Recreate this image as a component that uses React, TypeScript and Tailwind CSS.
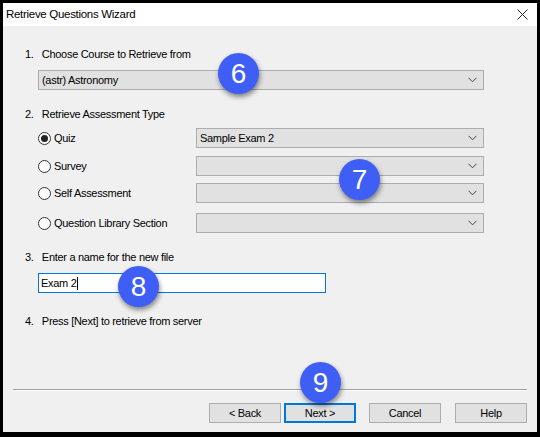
import React from "react";

const FONT = { fontFamily: '"Liberation Sans", Arial, sans-serif' };

function Chevron() {
  return (
    <svg width="9" height="6" viewBox="0 0 9 6" className="shrink-0">
      <polyline points="0.5,0.8 4.5,4.8 8.5,0.8" fill="none" stroke="#444" strokeWidth="1" />
    </svg>
  );
}

function Combo({ text, className = "" }: { text?: string; className?: string }) {
  return (
    <div
      className={`h-[20px] flex items-center justify-between bg-[#e1e1e1] border border-[#adadad] pl-[3px] pr-[6px] text-black ${className}`}
    >
      <span>{text ?? ""}</span>
      <Chevron />
    </div>
  );
}

function Radio({ checked }: { checked?: boolean }) {
  return (
    <span className="w-[13px] h-[13px] rounded-full border border-[#333] bg-white flex items-center justify-center shrink-0">
      {checked ? <span className="w-[7px] h-[7px] rounded-full bg-[#222]" /> : null}
    </span>
  );
}

function RadioRow({ label, checked, value, mt }: { label: string; checked?: boolean; value?: string; mt: string }) {
  return (
    <div className={`flex items-center ${mt}`}>
      <div className="w-[158px] flex items-center gap-[3px]">
        <Radio checked={checked} />
        <span>{label}</span>
      </div>
      <Combo text={value} className="w-[288px]" />
    </div>
  );
}

function Badge({ n, x, y }: { n: number; x: number; y: number }) {
  // x/y = centre in page coords, minus the 3px window frame
  return (
    <div
      className="absolute w-[41px] h-[41px] rounded-full bg-[#3f5ef5] text-white flex items-center justify-center text-[28px] tracking-normal shadow-[1px_3px_5px_rgba(0,0,0,0.45)]"
      style={{ left: x - 20, top: y - 20 }}
    >
      {n}
    </div>
  );
}

function Btn({ label, primary, className = "" }: { label: string; primary?: boolean; className?: string }) {
  return (
    <div
      className={`w-[72px] h-[20px] flex items-center justify-center bg-[#e1e1e1] ${
        primary ? "border-2 border-[#0078d7]" : "border border-[#adadad]"
      } ${className}`}
    >
      {label}
    </div>
  );
}

export default function App() {
  return (
    <div
      className="w-[540px] h-[437px] bg-black pt-[3px] px-[3px] pb-[5px] text-[11px] tracking-[-0.3px] leading-[15px]"
      style={FONT}
    >
      <div className="w-full h-full flex flex-col text-black relative">
        <div className="h-[23px] bg-white flex items-center justify-between pl-[3px] pr-[9px] text-[11.5px]">
          <span>Retrieve Questions Wizard</span>
          <svg width="11" height="11" viewBox="0 0 11 11">
            <path d="M0.5 0.5 L10.5 10.5 M10.5 0.5 L0.5 10.5" stroke="#222" strokeWidth="1" />
          </svg>
        </div>
        <div className="flex-1 bg-[#f0f0f0] flex flex-col">
          <div className="pl-[22px] pt-[21px]">1.&nbsp;&nbsp; Choose Course to Retrieve from</div>
          <Combo text="(astr) Astronomy" className="ml-[35px] mt-[8px] w-[446px]" />
          <div className="pl-[22px] mt-[17px]">2.&nbsp;&nbsp; Retrieve Assessment Type</div>
          <div className="ml-[35px]">
            <RadioRow label="Quiz" checked value="Sample Exam 2" mt="mt-[6px]" />
            <RadioRow label="Survey" mt="mt-[8px]" />
            <RadioRow label="Self Assessment" mt="mt-[7px]" />
            <RadioRow label="Question Library Section" mt="mt-[10px]" />
          </div>
          <div className="pl-[22px] mt-[17px]">3.&nbsp;&nbsp; Enter a name for the new file</div>
          <div className="ml-[35px] mt-[8px] w-[288px] h-[20px] bg-white border border-[#0078d7] flex items-center pl-[2px]">
            Exam 2<span className="w-px h-[13px] bg-black" />
          </div>
          <div className="pl-[22px] mt-[21px]">4.&nbsp;&nbsp; Press [Next] to retrieve from server</div>
          <div className="mx-[10px] mt-[60px] border-t border-[#a0a0a0] border-b border-b-white" />
          <div className="flex justify-end pr-[10px] mt-[12px]">
            <Btn label="< Back" />
            <Btn label="Next >" primary className="ml-[3px]" />
            <Btn label="Cancel" className="ml-[13px]" />
            <Btn label="Help" className="ml-[14px]" />
          </div>
        </div>
        <Badge n={6} x={235} y={70} />
        <Badge n={7} x={356} y={176} />
        <Badge n={8} x={135} y={283} />
        <Badge n={9} x={317} y={379} />
      </div>
    </div>
  );
}
